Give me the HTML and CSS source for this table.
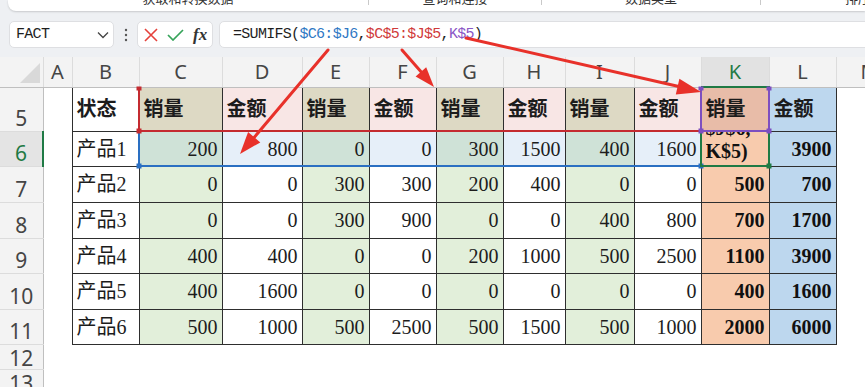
FILE: index.html
```html
<!DOCTYPE html>
<html lang="zh-CN">
<head>
<meta charset="utf-8">
<title>SUMIFS</title>
<link rel="stylesheet" href="styles.css">
</head>
<body>
<div class="app">
  <div class="ribbon">
    <div class="grp g1"><span>获取和转换数据</span></div>
    <div class="sep"></div>
    <div class="grp g2"><span>查询和连接</span></div>
    <div class="sep"></div>
    <div class="grp g3"><span>数据类型</span></div>
    <div class="sep"></div>
    <div class="grp g4"><span>排序和筛选</span></div>
  </div>

  <div class="fbar">
    <div class="namebox">
      <span class="mono">FACT</span>
      <svg class="chev" width="12" height="8" viewBox="0 0 12 8"><polyline points="1,1.5 6,6.5 11,1.5" fill="none" stroke="#444" stroke-width="1.3"/></svg>
    </div>
    <div class="dots">
      <svg width="4" height="14" viewBox="0 0 4 14"><circle cx="2" cy="2" r="1.2" fill="#555"/><circle cx="2" cy="7" r="1.2" fill="#555"/><circle cx="2" cy="12" r="1.2" fill="#555"/></svg>
    </div>
    <div class="fxbox">
      <svg class="ico-x" width="14" height="14" viewBox="0 0 14 14"><path d="M1 1 L13 13 M13 1 L1 13" stroke="#e5413b" stroke-width="1.6" fill="none"/></svg>
      <svg class="ico-ok" width="17" height="12" viewBox="0 0 17 12"><polyline points="1,6 6,11 16,1" fill="none" stroke="#36a35a" stroke-width="1.7"/></svg>
      <span class="fx">fx</span>
    </div>
    <div class="formula mono">=SUMIFS(<span class="rb">$C6:$J6</span>,<span class="rr">$C$5:$J$5</span>,<span class="rp">K$5</span>)</div>
  </div>

  <div class="sheet">
    <table class="grid">
      <colgroup>
        <col class="w43"><col class="w29"><col class="w67"><col class="w83"><col class="w80"><col class="w67"><col class="w67"><col class="w67"><col class="w62"><col class="w69"><col class="w67"><col class="w68"><col class="w67"><col class="w67">
      </colgroup>
      <tr class="rhd">
        <td class="ch corner"><svg width="22" height="22" viewBox="0 0 22 22"><polygon points="21,1 21,21 1,21" fill="#d9d9d9"/></svg></td>
        <td class="ch">A</td><td class="ch">B</td><td class="ch">C</td><td class="ch">D</td><td class="ch">E</td><td class="ch">F</td><td class="ch">G</td><td class="ch">H</td><td class="ch">I</td><td class="ch">J</td><td class="ch chs">K</td><td class="ch">L</td><td class="ch">M</td>
      </tr>
      <tr class="r44">
        <td class="rh">5</td><td></td>
        <td class="c bold">状态</td>
        <td class="c bold tan">销量</td><td class="c bold pink">金额</td>
        <td class="c bold tan">销量</td><td class="c bold pink">金额</td>
        <td class="c bold tan">销量</td><td class="c bold pink">金额</td>
        <td class="c bold tan">销量</td><td class="c bold pink">金额</td>
        <td class="c bold kh">销量</td><td class="c bold lh">金额</td>
        <td></td>
      </tr>
      <tr class="r35">
        <td class="rh rhs">6</td><td></td>
        <td class="c">产品1</td>
        <td class="c n gs">200</td><td class="c n ws">800</td>
        <td class="c n gs">0</td><td class="c n ws">0</td>
        <td class="c n gs">300</td><td class="c n ws">1500</td>
        <td class="c n gs">400</td><td class="c n ws">1600</td>
        <td class="c kd edit"><div class="editbox"><div class="editlines"><div class="cut">$J$6,</div><div>K$5)</div></div></div></td>
        <td class="c n b ld">3900</td>
        <td></td>
      </tr>
      <tr class="r36">
        <td class="rh">7</td><td></td>
        <td class="c">产品2</td>
        <td class="c n g">0</td><td class="c n">0</td>
        <td class="c n g">300</td><td class="c n">300</td>
        <td class="c n g">200</td><td class="c n">400</td>
        <td class="c n g">0</td><td class="c n">0</td>
        <td class="c n b kd">500</td><td class="c n b ld">700</td>
        <td></td>
      </tr>
      <tr class="r36">
        <td class="rh">8</td><td></td>
        <td class="c">产品3</td>
        <td class="c n g">0</td><td class="c n">0</td>
        <td class="c n g">300</td><td class="c n">900</td>
        <td class="c n g">0</td><td class="c n">0</td>
        <td class="c n g">400</td><td class="c n">800</td>
        <td class="c n b kd">700</td><td class="c n b ld">1700</td>
        <td></td>
      </tr>
      <tr class="r35">
        <td class="rh">9</td><td></td>
        <td class="c">产品4</td>
        <td class="c n g">400</td><td class="c n">400</td>
        <td class="c n g">0</td><td class="c n">0</td>
        <td class="c n g">200</td><td class="c n">1000</td>
        <td class="c n g">500</td><td class="c n">2500</td>
        <td class="c n b kd">1100</td><td class="c n b ld">3900</td>
        <td></td>
      </tr>
      <tr class="r36">
        <td class="rh">10</td><td></td>
        <td class="c">产品5</td>
        <td class="c n g">400</td><td class="c n">1600</td>
        <td class="c n g">0</td><td class="c n">0</td>
        <td class="c n g">0</td><td class="c n">0</td>
        <td class="c n g">0</td><td class="c n">0</td>
        <td class="c n b kd">400</td><td class="c n b ld">1600</td>
        <td></td>
      </tr>
      <tr class="r35">
        <td class="rh">11</td><td></td>
        <td class="c">产品6</td>
        <td class="c n g">500</td><td class="c n">1000</td>
        <td class="c n g">500</td><td class="c n">2500</td>
        <td class="c n g">500</td><td class="c n">1500</td>
        <td class="c n g">500</td><td class="c n">1000</td>
        <td class="c n b kd">2000</td><td class="c n b ld">6000</td>
        <td></td>
      </tr>
      <tr class="r25">
        <td class="rh rsm">12</td><td></td><td></td><td></td><td></td><td></td><td></td><td></td><td></td><td></td><td></td><td></td><td></td><td></td>
      </tr>
      <tr class="r25">
        <td class="rh rsm">13</td><td></td><td></td><td></td><td></td><td></td><td></td><td></td><td></td><td></td><td></td><td></td><td></td><td></td>
      </tr>
    </table>
  </div>

  <svg class="overlay" width="865" height="387" viewBox="0 0 865 387">
    <g fill="#2a6fc2" stroke="none">
      <rect x="138" y="131" width="2" height="36"/>
      <rect x="138" y="165" width="564" height="2"/>
      <rect x="136.5" y="163.5" width="5" height="5"/>
      <rect x="698.5" y="163.5" width="5" height="5"/>
    </g>
    <g fill="#c42b30" stroke="none">
      <rect x="138" y="87" width="2" height="45"/>
      <rect x="138" y="130" width="564" height="2"/>
      <rect x="136.5" y="86.5" width="5" height="4"/>
      <rect x="136.5" y="128.5" width="5" height="5"/>
    </g>
    <g fill="#1f7a45" stroke="none">
      <rect x="700" y="131" width="2" height="36"/>
      <rect x="768" y="131" width="2" height="36"/>
      <rect x="700" y="165" width="70" height="2"/>
      <rect x="766.5" y="163.5" width="5" height="5"/>
    </g>
    <g fill="#7d4fc0" stroke="none">
      <rect x="700" y="87" width="2" height="45"/>
      <rect x="768" y="87" width="2" height="45"/>
      <rect x="700" y="130" width="70" height="2"/>
      <rect x="698.5" y="86.5" width="5" height="4"/>
      <rect x="766.5" y="86.5" width="5" height="4"/>
      <rect x="698.5" y="128.5" width="5" height="5"/>
      <rect x="766.5" y="128.5" width="5" height="5"/>
    </g>
    <g stroke="#e8312a" stroke-width="3" stroke-linecap="round" fill="#e8312a">
      <line x1="328" y1="50" x2="252" y2="140"/>
      <polygon points="240,154 260.3,142.4 248.1,132.0" stroke="none"/>
      <line x1="402" y1="50" x2="423" y2="74"/>
      <polygon points="434,87 415.6,76.5 426.2,67.3" stroke="none"/>
      <line x1="466" y1="38" x2="681" y2="87"/>
      <polygon points="701,92 675.8,94.4 679.4,78.8" stroke="none"/>
    </g>
  </svg>
</div>
</body>
</html>
```
FILE: styles.css
```css
html, body {
  margin: 0;
  padding: 0;
}
body {
  width: 865px;
  height: 387px;
  overflow: hidden;
  background: #eef0f3;
  font-family: "Noto Sans", "Noto Sans CJK SC", sans-serif;
}
.app {
  position: relative;
  width: 865px;
  height: 387px;
  overflow: hidden;
}

/* ribbon strip */
.ribbon {
  margin-left: 8px;
  height: 11px;
  background: #fff;
  border-bottom-left-radius: 8px;
  box-shadow: 0 1px 2px rgba(0, 0, 0, 0.16);
  display: flex;
  overflow: hidden;
}
.grp {
  height: 11px;
  display: flex;
  justify-content: center;
  flex-shrink: 0;
  overflow: hidden;
}
.grp span {
  font: 13px/13px "Noto Sans CJK SC", sans-serif;
  color: #333;
  margin-top: -9px;
  white-space: nowrap;
}
.g1 { width: 360px; }
.g2 { width: 172px; }
.g3 { width: 218px; }
.g4 { flex: 1 1 auto; min-width: 0; justify-content: flex-start; padding-left: 84px; }
.sep {
  width: 1px;
  height: 5px;
  background: #c9c9c9;
  flex-shrink: 0;
}

/* formula bar */
.fbar {
  display: flex;
  align-items: center;
  height: 27px;
  margin-top: 10px;
}
.mono {
  font-family: "Liberation Mono", "Noto Sans CJK SC", monospace;
  font-size: 15px;
  letter-spacing: -0.7px;
  color: #1e1e1e;
}
.namebox {
  margin-left: 9px;
  width: 105px;
  height: 27px;
  box-sizing: border-box;
  background: #fff;
  border: 1px solid #dedfe2;
  border-radius: 5px;
  display: flex;
  align-items: center;
  justify-content: space-between;
  padding: 0 4px 0 6px;
  flex-shrink: 0;
}
.chev { display: block; }
.dots {
  width: 23px;
  display: flex;
  justify-content: center;
  flex-shrink: 0;
}
.dots svg { display: block; }
.fxbox {
  width: 76px;
  height: 27px;
  box-sizing: border-box;
  background: #fff;
  border: 1px solid #dedfe2;
  border-radius: 5px;
  display: flex;
  align-items: center;
  padding-left: 6px;
  flex-shrink: 0;
}
.ico-x { display: block; margin-right: 9px; }
.ico-ok { display: block; margin-right: 9px; }
.fx {
  font-family: "Liberation Serif", serif;
  font-style: italic;
  font-weight: 700;
  font-size: 17px;
  color: #333;
}
.formula {
  flex: 1;
  margin-left: 6px;
  margin-right: -12px;
  height: 27px;
  box-sizing: border-box;
  background: #fff;
  border: 1px solid #dedfe2;
  border-radius: 5px;
  padding-left: 13px;
  line-height: 25px;
  white-space: nowrap;
}
.rb { color: #2f78c4; }
.rr { color: #d03a3a; }
.rp { color: #8a56c6; }

/* sheet */
.sheet {
  margin-top: 9px;
  height: 330px;
  width: 865px;
  overflow: hidden;
  background: #fff;
}
.grid {
  border-collapse: collapse;
  table-layout: fixed;
  width: 903px;
}
.grid td {
  padding: 0;
  white-space: nowrap;
  overflow: hidden;
}
.w43 { width: 43px; }
.w29 { width: 29px; }
.w62 { width: 62px; }
.w67 { width: 67px; }
.w68 { width: 68px; }
.w69 { width: 69px; }
.w80 { width: 80px; }
.w83 { width: 83px; }

.rhd { height: 30px; }
.r44 { height: 44px; }
.r35 { height: 35px; }
.r36 { height: 36px; }
.r25 { height: 25px; }

.ch {
  background: #f3f3f3;
  border-right: 1px solid #dcdcdc;
  border-bottom: 1px solid #bfbfbf;
  text-align: center;
  vertical-align: middle;
  font-family: "Noto Sans", sans-serif;
  font-size: 20px;
  line-height: 20px;
  color: #454545;
}
.corner {
  text-align: right;
  vertical-align: bottom;
}
.corner svg { display: block; margin: 0 2px 3px auto; }
.chs {
  background: #e2e2e2;
  color: #1f7a45;
  border-bottom: 2px solid #1f7a45;
}
.rh {
  background: #f3f3f3;
  border-right: 1px solid #bfbfbf;
  border-bottom: 1px solid #dcdcdc;
  text-align: center;
  vertical-align: bottom;
  padding-bottom: 3px !important;
  font-family: "Noto Sans", sans-serif;
  font-size: 21px;
  line-height: 20px;
  color: #454545;
}
.rsm {
  line-height: 18px;
  padding-bottom: 2px !important;
}
.rhs {
  background: #e4e4e4;
  color: #1f7a45;
  border-right: 2px solid #1f7a45;
}

.c {
  border: 1px solid #2e2e2e;
  font-family: "Liberation Serif", "Noto Sans CJK SC", serif;
  font-size: 20px;
  line-height: 22px;
  color: #1c1c1c;
  padding: 0 4px 0 4px !important;
  vertical-align: middle;
}
.bold { font-weight: 700; }
.n { text-align: right; }
.b { font-weight: 700; color: #111; }

.tan { background: #ddd9c4; }
.pink { background: #f8e6e5; }
.kh { background: #e8bca8; }
.lh { background: #bdd7ee; }
.g { background: #e2efda; }
.gs { background: #cfe2d7; }
.ws { background: #e6eff9; }
.kd { background: #f8cbad; }
.ld { background: #bdd7ee; }

.edit {
  vertical-align: top;
}
.editbox {
  height: 34px;
  overflow: hidden;
}
.editlines {
  margin-top: -15px;
  font-weight: 700;
  line-height: 23px;
  color: #111;
}
.cut {
  height: 23px;
  overflow: hidden;
}

.overlay {
  position: absolute;
  left: 0;
  top: 0;
  pointer-events: none;
}
```
